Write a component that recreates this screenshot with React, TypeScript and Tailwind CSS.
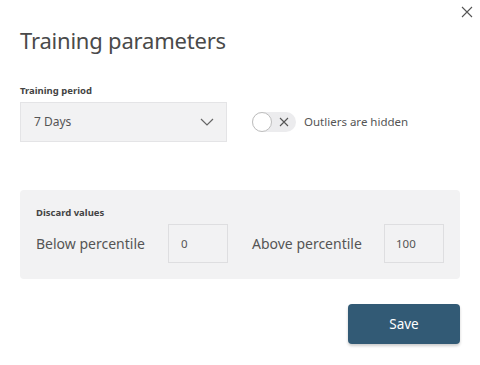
import React from "react";

const font = { fontFamily: '"Noto Sans", "Open Sans", sans-serif' };

const App: React.FC = () => {
  return (
    <div className="relative w-[480px] h-[365px] bg-white text-[#555]" style={font}>
      <button className="absolute right-[7px] top-[6px] w-[12px] h-[12px] text-[#555]">
        <svg viewBox="0 0 12 12" width="12" height="12" fill="none" stroke="currentColor" strokeWidth="1.1">
          <path d="M1 1L11 11M11 1L1 11" />
        </svg>
      </button>
      <div className="px-5 pt-[25px]">
        <h1 className="text-[22px] leading-[30px] text-[#4a4a4a] tracking-[-0.2px]">Training parameters</h1>

        <div className="mt-[29px] text-[9.5px] font-bold leading-[14px] text-[#444]">Training period</div>
        <div className="mt-[4px] flex items-center">
          <div className="flex items-center justify-between w-[207px] h-[40px] bg-[#f2f2f3] border border-[#e4e4e6] pl-[13px] pr-[12px]">
            <span className="text-[12px] text-[#555]">7 Days</span>
            <svg viewBox="0 0 14 8" width="14" height="8" fill="none" stroke="#666" strokeWidth="1.2">
              <path d="M1 1L7 7L13 1" />
            </svg>
          </div>
          <div className="ml-[25px] flex items-center">
            <div className="relative w-[44px] h-[20px] rounded-full bg-[#ececee]">
              <div className="absolute left-0 top-0 w-[20px] h-[20px] rounded-full bg-white border border-[#bdbdbd]" />
              <svg className="absolute left-[27px] top-[5px]" viewBox="0 0 10 10" width="10" height="10" fill="none" stroke="#555" strokeWidth="1.1">
                <path d="M1 1L9 9M9 1L1 9" />
              </svg>
            </div>
            <span className="ml-[8px] text-[11.5px] text-[#555]">Outliers are hidden</span>
          </div>
        </div>

        <div className="mt-[48px] h-[89px] rounded-[4px] bg-[#f2f2f3] px-4 pt-[16px]">
          <div className="text-[9.5px] font-bold leading-[14px] text-[#444]">Discard values</div>
          <div className="mt-[4px] flex items-center">
            <span className="w-[132px] text-[14px] text-[#555]">Below percentile</span>
            <div className="flex items-center w-[60px] h-[39px] border border-[#dedee0] bg-[#f2f2f3] pl-[12px] text-[11.5px] text-[#555]">0</div>
            <span className="ml-[24px] w-[132px] text-[14px] text-[#555]">Above percentile</span>
            <div className="flex items-center w-[60px] h-[39px] border border-[#dedee0] bg-[#f2f2f3] pl-[11px] text-[11.5px] text-[#555]">100</div>
          </div>
        </div>

        <div className="mt-[25px] flex justify-end">
          <button className="w-[112px] h-[40px] rounded-[4px] bg-[#325a75] text-white text-[13.5px] shadow-[0_2px_3px_rgba(0,0,0,0.2)]">Save</button>
        </div>
      </div>
    </div>
  );
};

export default App;
